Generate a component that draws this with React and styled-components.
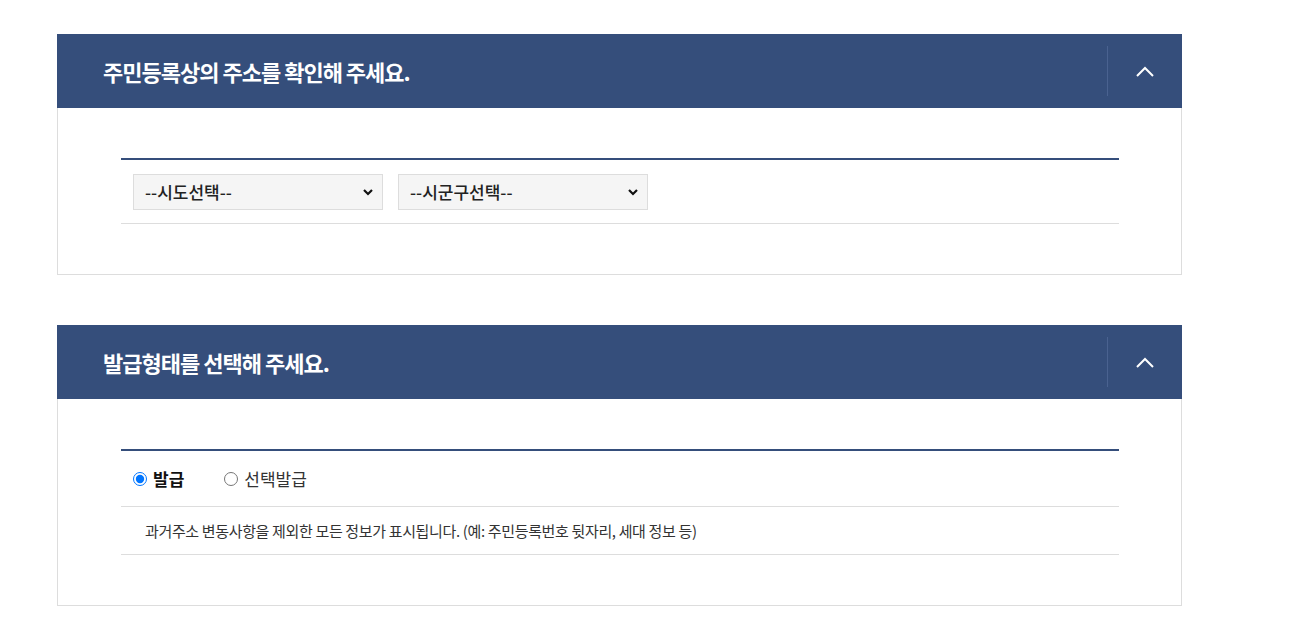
import React, { useState } from 'react'
import styled, { createGlobalStyle } from 'styled-components'

const GlobalStyle = createGlobalStyle`
  body {
    margin: 0;
    background: #fff;
    font-family: 'Noto Sans CJK KR', 'Noto Sans', sans-serif;
    color: #222;
  }
`

const Page = styled.div`
  padding: 34px 0 0 57px;
  display: flex;
  flex-direction: column;
  gap: 50px;
`

const Section = styled.section`
  width: 1125px;
`

const Header = styled.div`
  height: 74px;
  background: #354e7b;
  display: flex;
  align-items: center;
  padding-left: 46px;
`

const Title = styled.h2`
  flex: 1;
  margin: 0;
  font-size: 22px;
  font-weight: 700;
  letter-spacing: -1px;
  color: #fff;
`

const Toggle = styled.button`
  width: 75px;
  height: 50px;
  border: none;
  border-left: 1px solid #4a6290;
  background: transparent;
  display: flex;
  align-items: center;
  justify-content: center;
  cursor: pointer;
  padding: 0;
`

const Body = styled.div`
  border: 1px solid #ddd;
  border-top: none;
  padding: 50px 62px 50px 63px;
`

const Table = styled.div`
  border-top: 2px solid #354e7b;
`

const Row = styled.div`
  display: flex;
  align-items: center;
  gap: ${p => p.$gap || 0}px;
  padding: ${p => p.$pad || '0 12px'};
  min-height: ${p => p.$h}px;
  border-bottom: 1px solid #ddd;
`

const SelectWrap = styled.div`
  position: relative;
  width: 250px;
`

const Select = styled.select`
  width: 100%;
  height: 36px;
  appearance: none;
  background: #f5f5f5;
  border: 1px solid #ddd;
  padding: 0 30px 0 11px;
  font-family: inherit;
  font-size: 17px;
  font-weight: 500;
  color: #222;
  letter-spacing: 0;
  outline: none;
`

const Caret = styled.svg`
  position: absolute;
  right: 9px;
  top: 14px;
  pointer-events: none;
`

const RadioLabel = styled.label`
  display: flex;
  align-items: center;
  gap: 6px;
  font-size: 17px;
  letter-spacing: 0;
  font-weight: ${p => (p.$active ? 700 : 400)};
  color: ${p => (p.$active ? '#111' : '#333')};
  cursor: pointer;

  input {
    margin: 0;
    width: 14px;
    height: 14px;
  }
`

const Desc = styled.p`
  margin: 0;
  font-size: 15px;
  letter-spacing: -0.35px;
  color: #333;
`

const Chevron = () => (
  <svg width="20" height="12" viewBox="0 0 20 12">
    <path d="M2 11 L10 3 L18 11" fill="none" stroke="#fff" strokeWidth="2" />
  </svg>
)

const DropCaret = () => (
  <Caret width="12" height="8" viewBox="0 0 12 8">
    <path d="M2 2 L6 6 L10 2" fill="none" stroke="#111" strokeWidth="2.2" />
  </Caret>
)

export default function App() {
  const [type, setType] = useState('all')

  return (
    <Page>
      <GlobalStyle />
      <Section>
        <Header>
          <Title>주민등록상의 주소를 확인해 주세요.</Title>
          <Toggle aria-label="접기"><Chevron /></Toggle>
        </Header>
        <Body>
          <Table>
            <Row $h={63} $gap={15}>
              <SelectWrap>
                <Select defaultValue="">
                  <option value="">--시도선택--</option>
                </Select>
                <DropCaret />
              </SelectWrap>
              <SelectWrap>
                <Select defaultValue="">
                  <option value="">--시군구선택--</option>
                </Select>
                <DropCaret />
              </SelectWrap>
            </Row>
          </Table>
        </Body>
      </Section>

      <Section>
        <Header>
          <Title>발급형태를 선택해 주세요.</Title>
          <Toggle aria-label="접기"><Chevron /></Toggle>
        </Header>
        <Body>
          <Table>
            <Row $h={55} $gap={40}>
              <RadioLabel $active={type === 'all'}>
                <input type="radio" name="type" checked={type === 'all'} onChange={() => setType('all')} />
                발급
              </RadioLabel>
              <RadioLabel $active={type === 'select'}>
                <input type="radio" name="type" checked={type === 'select'} onChange={() => setType('select')} />
                선택발급
              </RadioLabel>
            </Row>
            <Row $h={47} $pad="0 24px">
              <Desc>과거주소 변동사항을 제외한 모든 정보가 표시됩니다. (예: 주민등록번호 뒷자리, 세대 정보 등)</Desc>
            </Row>
          </Table>
        </Body>
      </Section>
    </Page>
  )
}
